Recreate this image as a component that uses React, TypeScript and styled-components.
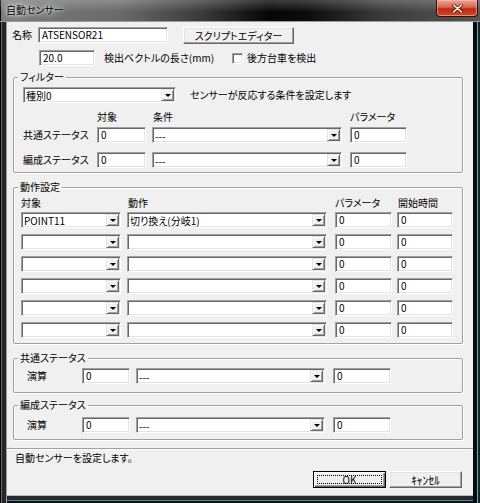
import React from "react";
import styled, { createGlobalStyle } from "styled-components";

const Global = createGlobalStyle`
  html, body { margin: 0; padding: 0; background: #000; }
  body {
    font-family: "Noto Sans CJK JP", "Noto Sans", sans-serif;
    font-size: 10px;
    font-feature-settings: "palt" 1;
    color: #000;
  }
  * { box-sizing: border-box; }
`;

const Window = styled.div`
  width: 480px;
  height: 503px;
  display: flex;
  flex-direction: column;
  background:
    linear-gradient(to left, #1e1e1e 0 2px, #3ab8da 2px 3px, #080808 3px 7px, transparent 7px),
    linear-gradient(to right, #000 0 1px, #6a6a6a 1px 2px, #262626 2px 6px, #9a9a9a 6px 7px, transparent 7px),
    linear-gradient(to bottom, transparent 0 495px, #b8b8b8 495px 496px, #2a2a2a 496px 500px, #3a8fa8 500px 501px, #111 501px);
  background-color: #1a1a1a;
`;

const TitleBar = styled.div`
  height: 22px;
  flex: none;
  display: flex;
  justify-content: space-between;
  align-items: flex-start;
  background:
    linear-gradient(to bottom, rgba(255, 255, 255, 0.22) 0, rgba(255, 255, 255, 0.05) 45%, rgba(0, 0, 0, 0) 55%),
    linear-gradient(to right, #000 0 1px, #7a7a7a 1px, #6a6a6a 25%, #3a3a3a 42%, #060606 56%, #0c0c0c 64%, #3c3c3c 80%, #555 100%);
  border-bottom: 1px solid #9a9a9a;
`;

const Title = styled.div`
  padding: 4px 0 0 6px;
  line-height: 12px;
  font-size: 10px;
  color: #000;
  text-shadow: 0 0 3px #fff, 0 0 6px #e8e8e8, 0 0 9px #ccc;
`;

const CloseBtn = styled.div`
  width: 42px;
  height: 17px;
  margin-right: 2px;
  border: 1px solid #3a0d08;
  border-top: none;
  border-radius: 0 0 4px 4px;
  background: linear-gradient(to bottom, #eaa898 0%, #d8644c 45%, #bb2a12 55%, #d24a2e 100%);
  box-shadow: inset 0 0 0 1px rgba(255, 200, 190, 0.5);
  display: flex;
  align-items: center;
  justify-content: center;
`;

const Frame = styled.div`
  flex: 1;
  padding: 0 7px 8px 7px;
  display: flex;
`;

const Client = styled.div`
  width: 466px;
  height: 473px;
  background: #f0f0f0;
  display: flex;
  flex-direction: column;
`;

const Row = styled.div<{ $mt: number; $pl: number; $h?: number }>`
  display: flex;
  align-items: center;
  margin-top: ${(p) => p.$mt}px;
  padding-left: ${(p) => p.$pl}px;
  height: ${(p) => p.$h ?? 16}px;
  flex: none;
`;

const TopRow = styled(Row)`
  align-items: flex-start;
`;

const Label = styled.div<{ $w?: number; $ml?: number; $mt?: number }>`
  ${(p) => (p.$w ? `width: ${p.$w}px;` : "")}
  margin-left: ${(p) => p.$ml ?? 0}px;
  margin-top: ${(p) => p.$mt ?? 0}px;
  flex: none;
  line-height: 12px;
  white-space: nowrap;
`;

const sunken = `
  background: #fff;
  border: 1px solid;
  border-color: #a0a0a0 #fff #fff #a0a0a0;
  box-shadow: inset 1px 1px 0 #696969, inset -1px -1px 0 #e3e3e3;
`;

const Edit = styled.div<{ $w: number; $ml?: number }>`
  ${sunken}
  width: ${(p) => p.$w}px;
  margin-left: ${(p) => p.$ml ?? 0}px;
  height: 16px;
  flex: none;
  padding-left: 3px;
  line-height: 14px;
  white-space: nowrap;
`;

const Combo = styled.div<{ $w: number; $ml?: number }>`
  ${sunken}
  width: ${(p) => p.$w}px;
  margin-left: ${(p) => p.$ml ?? 0}px;
  height: 16px;
  flex: none;
  padding: 1px;
  display: flex;
  align-items: stretch;
`;

const ComboText = styled.div`
  flex: 1;
  padding-left: 1px;
  line-height: 13px;
  white-space: nowrap;
`;

const ArrowBtn = styled.div`
  width: 13px;
  flex: none;
  background: #f0f0f0;
  border: 1px solid;
  border-color: #e3e3e3 #696969 #696969 #e3e3e3;
  box-shadow: inset 1px 1px 0 #fff, inset -1px -1px 0 #a0a0a0;
  display: flex;
  align-items: center;
  justify-content: center;
  &::after {
    content: "";
    width: 0;
    height: 0;
    margin-top: 1px;
    border-left: 3px solid transparent;
    border-right: 3px solid transparent;
    border-top: 3px solid #000;
  }
`;

const Btn = styled.div<{ $w: number; $ml?: number; $default?: boolean; $narrow?: boolean }>`
  position: relative;
  width: ${(p) => p.$w}px;
  margin-left: ${(p) => p.$ml ?? 0}px;
  height: 17px;
  flex: none;
  background: #f0f0f0;
  border: 1px solid;
  border-color: ${(p) => (p.$default ? "#000" : "#fff #696969 #696969 #fff")};
  box-shadow: ${(p) =>
    p.$default
      ? "inset 1px 1px 0 #fff, inset -1px -1px 0 #696969, inset -2px -2px 0 #a0a0a0"
      : "inset -1px -1px 0 #a0a0a0, inset 1px 1px 0 #e3e3e3"};
  display: flex;
  align-items: center;
  justify-content: center;
  line-height: 12px;
  white-space: nowrap;
  ${(p) => (p.$narrow ? "font-size: 11.5px; font-feature-settings: normal;" : "")}
  &::after {
    content: "";
    display: ${(p) => (p.$default ? "block" : "none")};
    position: absolute;
    inset: 3px;
    border: 1px dotted #000;
  }
`;

const Check = styled.div<{ $ml?: number }>`
  ${sunken}
  width: 11px;
  height: 11px;
  flex: none;
  margin-left: ${(p) => p.$ml ?? 0}px;
`;

const Group = styled.fieldset<{ $mt: number; $pb: number }>`
  margin: ${(p) => p.$mt}px 10px 0 6px;
  padding: 0 0 ${(p) => p.$pb}px 0;
  min-width: 0;
  flex: none;
  border: 1px solid #a0a0a0;
  border-radius: 2px;
  box-shadow: inset 1px 1px 0 #fff, 1px 1px 0 #fff;
`;

const Legend = styled.legend`
  margin-left: 4px;
  padding: 0 2px;
  line-height: 12px;
  font-size: 10px;
  background: #f0f0f0;
`;

const Separator = styled.div`
  margin-top: 8px;
  height: 2px;
  flex: none;
  border-top: 1px solid #a0a0a0;
  border-bottom: 1px solid #fff;
`;

const Status = styled.div`
  margin-top: 2px;
  padding-left: 8px;
  line-height: 12px;
  height: 12px;
  flex: none;
`;

const ButtonRow = styled.div`
  margin-top: 7px;
  display: flex;
  justify-content: flex-end;
  padding-right: 11px;
  flex: none;
`;

const CloseGlyph = () => (
  <svg width="11" height="9" viewBox="0 0 11 9">
    <path d="M1.5 1 L9.5 8 M9.5 1 L1.5 8" stroke="#5a1408" strokeWidth="3" strokeLinecap="round" />
    <path d="M1.5 1 L9.5 8 M9.5 1 L1.5 8" stroke="#fff" strokeWidth="1.6" strokeLinecap="round" />
  </svg>
);

const DropDown = ({ w, ml, text }: { w: number; ml?: number; text?: string }) => (
  <Combo $w={w} $ml={ml}>
    <ComboText>{text ?? ""}</ComboText>
    <ArrowBtn />
  </Combo>
);

const actions = [
  { target: "POINT11", action: "切り換え(分岐1)" },
  { target: "", action: "" },
  { target: "", action: "" },
  { target: "", action: "" },
  { target: "", action: "" },
  { target: "", action: "" },
];

export default function App() {
  return (
    <>
      <Global />
      <Window>
        <TitleBar>
          <Title>自動センサー</Title>
          <CloseBtn>
            <CloseGlyph />
          </CloseBtn>
        </TitleBar>
        <Frame>
          <Client>
            <TopRow $mt={5} $pl={5} $h={17}>
              <Label $w={26} $mt={2}>名称</Label>
              <Edit $w={130}>ATSENSOR21</Edit>
              <Btn $w={111} $ml={15}>スクリプトエディター</Btn>
            </TopRow>
            <Row $mt={6} $pl={32}>
              <Edit $w={56}>20.0</Edit>
              <Label $w={128} $ml={9}>検出ベクトルの長さ(mm)</Label>
              <Check />
              <Label $ml={4}>後方台車を検出</Label>
            </Row>

            <Group $mt={5} $pb={4}>
              <Legend>フィルター</Legend>
              <Row $mt={4} $pl={9}>
                <DropDown w={153} text="種別0" />
                <Label $ml={14}>センサーが反応する条件を設定します</Label>
              </Row>
              <Row $mt={8} $pl={83} $h={12}>
                <Label $w={56}>対象</Label>
                <Label $w={197}>条件</Label>
                <Label>パラメータ</Label>
              </Row>
              <Row $mt={4} $pl={9}>
                <Label $w={74}>共通ステータス</Label>
                <Edit $w={49}>0</Edit>
                <DropDown w={190} ml={6} text="---" />
                <Edit $w={57} $ml={8}>0</Edit>
              </Row>
              <Row $mt={9} $pl={9}>
                <Label $w={74}>編成ステータス</Label>
                <Edit $w={49}>0</Edit>
                <DropDown w={190} ml={6} text="---" />
                <Edit $w={57} $ml={8}>0</Edit>
              </Row>
            </Group>

            <Group $mt={8} $pb={5}>
              <Legend>動作設定</Legend>
              <Row $mt={4} $pl={7} $h={12}>
                <Label $w={107}>対象</Label>
                <Label $w={207}>動作</Label>
                <Label $w={63}>パラメータ</Label>
                <Label>開始時間</Label>
              </Row>
              {actions.map((a, i) => (
                <Row key={i} $mt={i === 0 ? 3 : 6} $pl={7}>
                  <DropDown w={100} text={a.target} />
                  <DropDown w={200} ml={6} text={a.action} />
                  <Edit $w={57} $ml={8}>0</Edit>
                  <Edit $w={56} $ml={5}>0</Edit>
                </Row>
              ))}
            </Group>

            <Group $mt={8} $pb={8}>
              <Legend>共通ステータス</Legend>
              <Row $mt={4} $pl={13}>
                <Label $w={55}>演算</Label>
                <Edit $w={48}>0</Edit>
                <DropDown w={189} ml={6} text="---" />
                <Edit $w={58} $ml={8}>0</Edit>
              </Row>
            </Group>

            <Group $mt={6} $pb={6}>
              <Legend>編成ステータス</Legend>
              <Row $mt={6} $pl={13}>
                <Label $w={55}>演算</Label>
                <Edit $w={48}>0</Edit>
                <DropDown w={189} ml={6} text="---" />
                <Edit $w={58} $ml={8}>0</Edit>
              </Row>
            </Group>

            <Separator />
            <Status>自動センサーを設定します。</Status>
            <ButtonRow>
              <Btn $w={73} $default>OK</Btn>
              <Btn $w={73} $ml={3} $narrow>ｷｬﾝｾﾙ</Btn>
            </ButtonRow>
          </Client>
        </Frame>
      </Window>
    </>
  );
}
